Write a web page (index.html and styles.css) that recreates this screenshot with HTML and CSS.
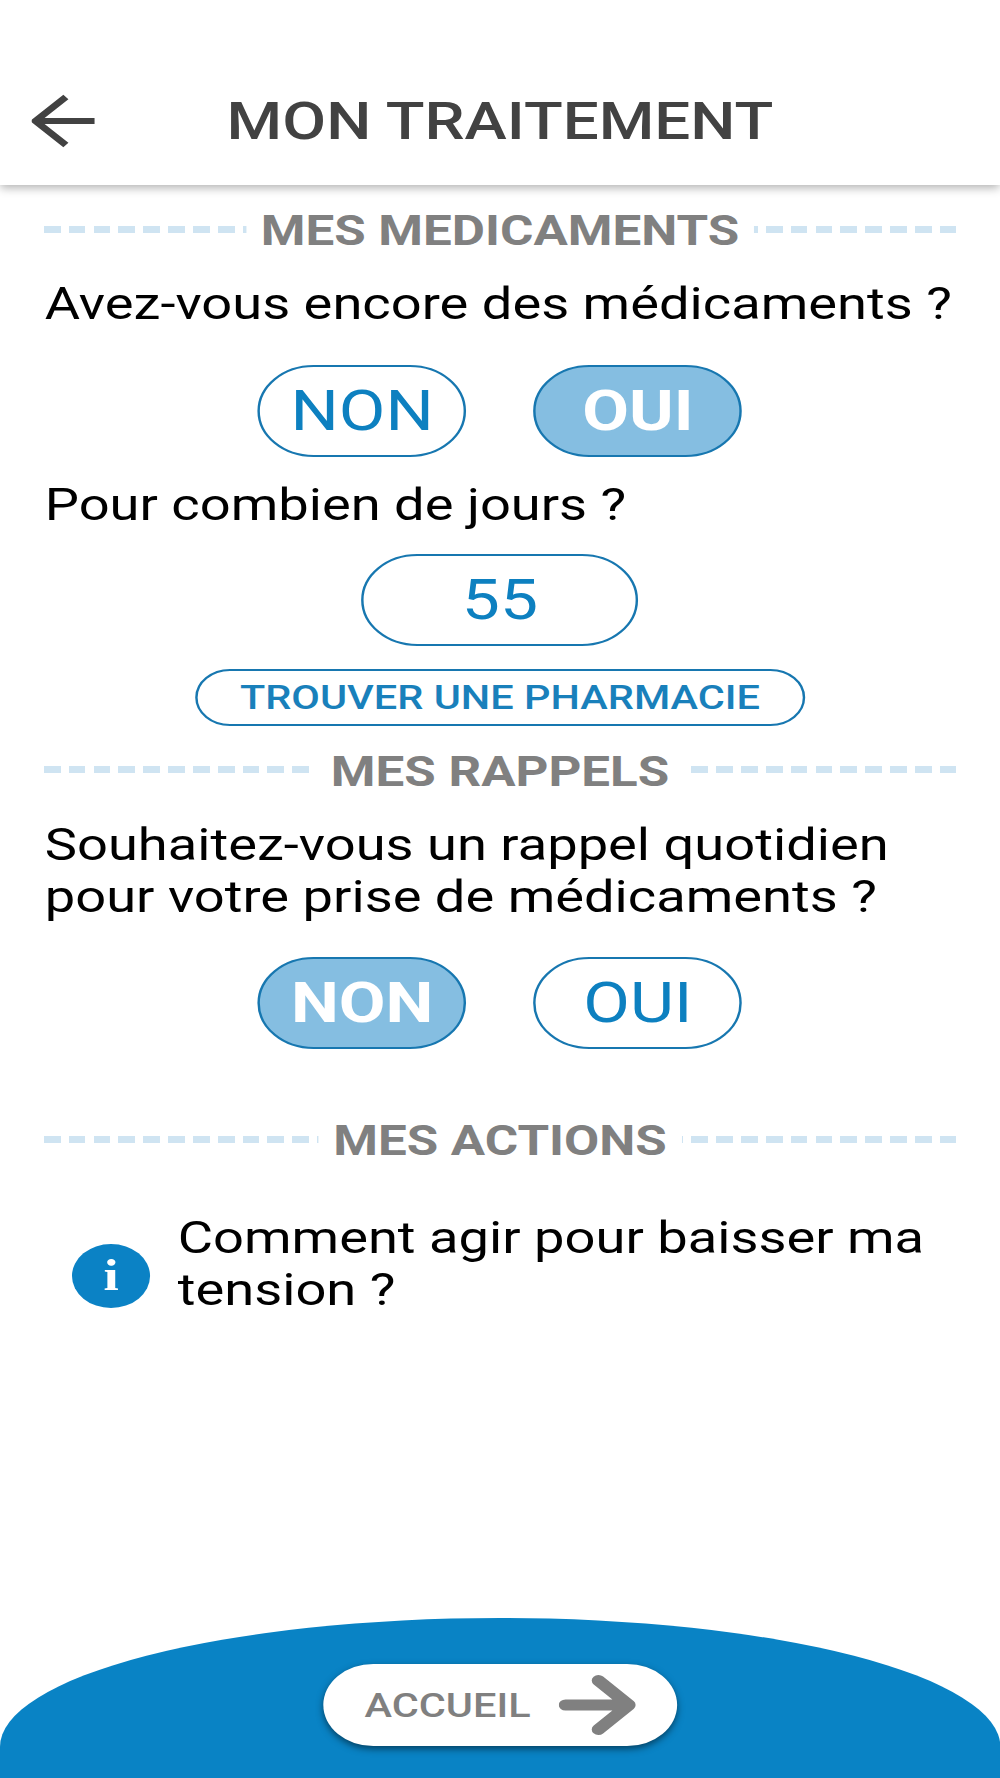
FILE: index.html
```html
<!DOCTYPE html>
<html lang="fr">
<head>
<meta charset="utf-8">
<title>Mon traitement</title>
<link rel="stylesheet" href="styles.css">
</head>
<body>
<div class="screen">
  <header class="topbar">
    <svg class="back" viewBox="0 0 53 54" aria-label="Retour"><path d="M51.500 27H4M28 3 3 27 28 51" fill="none" stroke="#424242" stroke-width="6"/></svg>
    <h1 class="title">MON TRAITEMENT</h1>
  </header>
  <main class="content">
    <div class="heading"><span class="dashes"></span><h2>MES MEDICAMENTS</h2><span class="dashes dashes-end"></span></div>
    <p class="question">Avez-vous encore des médicaments ?</p>
    <div class="choices"><button class="pill">NON</button><button class="pill selected">OUI</button></div>
    <p class="question days-label">Pour combien de jours ?</p>
    <button class="pill days">55</button>
    <button class="pill pharmacy">TROUVER UNE PHARMACIE</button>
    <div class="heading reminders"><span class="dashes"></span><h2>MES RAPPELS</h2><span class="dashes dashes-end"></span></div>
    <p class="question">Souhaitez-vous un rappel quotidien<br>pour votre prise de médicaments ?</p>
    <div class="choices"><button class="pill selected">NON</button><button class="pill">OUI</button></div>
    <div class="heading actions"><span class="dashes"></span><h2>MES ACTIONS</h2><span class="dashes dashes-end"></span></div>
    <div class="tip"><span class="info">i</span><p>Comment agir pour baisser ma<br>tension ?</p></div>
  </main>
  <footer class="footer">
    <button class="home"><span>ACCUEIL</span><svg class="forward" viewBox="0 0 64 60" aria-hidden="true"><path d="M5.500 30H57.500M32.500 5.500 57.500 30 32.500 54.500" fill="none" stroke="#808080" stroke-width="11" stroke-linecap="round" stroke-linejoin="round"/></svg></button>
  </footer>
</div>
</body>
</html>
```
FILE: styles.css
```css
* { box-sizing: border-box; }
body { margin: 0; overflow: hidden; background: #fff; }
/* The screen is laid out 819.672px wide and widened to fill the viewport. */
.screen {
  width: 819.672px;
  height: 1778px;
  display: flex;
  flex-direction: column;
  transform: scaleX(1.22);
  transform-origin: 0 0;
  font-family: Roboto, "Liberation Sans", sans-serif;
  color: #000;
}
h1, h2, p { margin: 0; }
button { font-family: inherit; padding: 0; }
.topbar {
  height: 185px;
  flex: none;
  display: grid;
  grid-template-columns: 79px 1fr 79px;
  align-items: center;
  padding-top: 58px;
  box-shadow: 0 3px 8px rgba(0, 0, 0, .3);
}
.back { width: 53px; height: 54px; margin: -1px 0 0 26px; display: block; }
.title { padding-top: 1px; text-align: center; font-size: 52.2px; font-weight: 500; line-height: 62px; color: #424242; white-space: nowrap; }
.content { flex: 1; padding: 21px 36px 0; min-height: 0; }
.heading { height: 50px; display: flex; align-items: center; gap: 12px; margin-bottom: 22.4px; }
.heading h2 { font-size: 41.9px; font-weight: 700; line-height: 50px; color: #808080; white-space: nowrap; }
.dashes {
  flex: 1;
  height: 7px;
  margin-bottom: 3.5px;
  background: repeating-linear-gradient(90deg, #cfe4f2 0 13.7px, transparent 13.7px 20.36px);
}
.dashes-end { background: repeating-linear-gradient(270deg, #cfe4f2 0 13.7px, transparent 13.7px 20.36px); }
.question, .tip p { font-size: 44.47px; line-height: 52px; white-space: nowrap; }
.question { padding-left: .7px; }
.choices { display: flex; justify-content: center; gap: 55px; margin-top: 34.4px; }
.pill {
  display: block;
  width: 171px;
  height: 92px;
  border: 2px solid #1777b0;
  border-radius: 46px;
  background: #fff;
  color: #0d80c0;
  font-size: 55.6px;
  line-height: 66px;
}
.selected { background: #85bee1; color: #fff; font-weight: 700; }
.days-label { margin-top: 22.2px; }
.days { width: 227px; margin: 23px auto 0; }
.pharmacy { width: 500px; height: 57px; margin: 22.6px auto 0; color: #1980bb; font-size: 34px; font-weight: 500; line-height: 40px; }
.reminders { margin-top: 21px; margin-bottom: 22.2px; }
.actions { margin-top: 67.2px; margin-bottom: 45.2px; }
.tip { display: flex; align-items: flex-end; gap: 22.7px; padding-left: 23px; }
.info {
  width: 64px;
  height: 64px;
  margin-bottom: 8px;
  border-radius: 50%;
  background: #0b82c5;
  color: #fff;
  font: 700 45px/62px "Liberation Serif", serif;
  text-align: center;
}
.footer {
  flex: none;
  height: 160px;
  padding-top: 45.5px;
  border-radius: 50% 50% 0 0 / 129px 129px 0 0;
  background: #0983c5;
}
.home {
  width: 290px;
  height: 82.5px;
  margin: 0 auto;
  display: flex;
  align-items: center;
  justify-content: center;
  gap: 23px;
  padding: 0 0 0 1px;
  border: 0;
  border-radius: 42px;
  background: #fff;
  color: #808080;
  font-size: 34px;
  font-weight: 500;
  box-shadow: 0 3px 7px rgba(0, 0, 0, .5);
}
.forward { width: 64px; height: 60px; }
```
